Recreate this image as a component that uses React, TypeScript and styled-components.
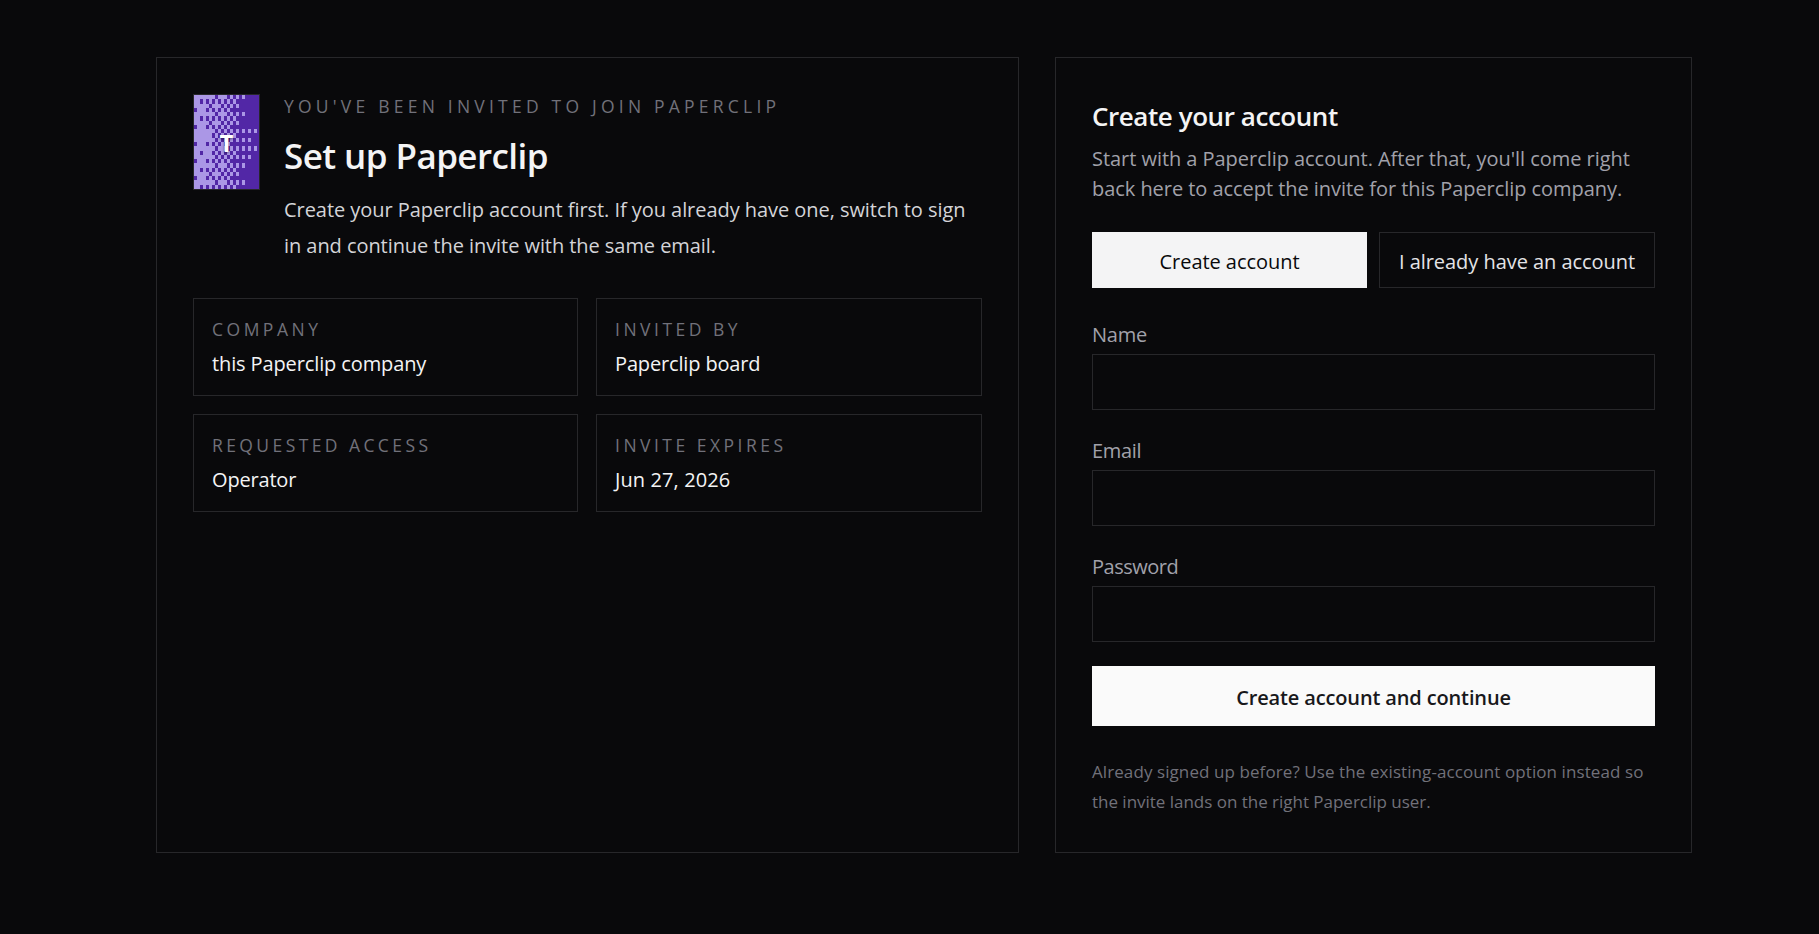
import React from 'react';
import styled, { createGlobalStyle } from 'styled-components';

const GlobalStyle = createGlobalStyle`
  *, *::before, *::after { box-sizing: border-box; }
  html, body { margin: 0; background: #09090b; }
  body {
    font-family: "Open Sans", "Noto Sans", sans-serif;
    font-size: 20px;
    line-height: 30px;
    color: #f4f4f5;
  }
  h1, h2, p { margin: 0; }
`;

const Page = styled.main`
  padding: 57px 127px 80px 156px;
`;

const Layout = styled.div`
  display: grid;
  grid-template-columns: 863px 637px;
  gap: 36px;
`;

const Panel = styled.section`
  border: 1px solid #27272a;
  padding: 36px 36px 35px;
`;

const Line = styled.span<{ $tracking?: number }>`
  display: block;
  white-space: nowrap;
  letter-spacing: ${({ $tracking = 0 }) => $tracking}px;
`;

const InviteHeader = styled.header`
  display: flex;
  align-items: flex-start;
  gap: 24px;
`;

const LogoFrame = styled.div`
  display: grid;
  flex: none;
  width: 67px;
  height: 96px;
  border: 1px solid #27272a;
  background: #5227a6;
  overflow: hidden;
  > * { grid-area: 1 / 1; }
`;

const Pattern = styled.svg`
  display: block;
  width: 65px;
  height: 94px;
`;

const Initial = styled.span`
  place-self: center;
  padding-top: 1px;
  font-size: 24px;
  font-weight: 700;
  line-height: 36px;
  color: #fff;
  text-shadow: 0 1px 3px rgba(0, 0, 0, 0.55);
`;

const Eyebrow = styled.p<{ $tracking: number }>`
  font-size: 17.5px;
  line-height: 24px;
  letter-spacing: ${({ $tracking }) => $tracking}px;
  text-transform: uppercase;
  white-space: nowrap;
  color: #71717a;
`;

const InviteTitle = styled.h1`
  margin-top: 14px;
  font-size: 35px;
  font-weight: 600;
  line-height: 48px;
  letter-spacing: -0.57px;
`;

const InviteText = styled.p`
  margin-top: 12px;
  line-height: 36px;
  color: #d4d4d8;
`;

const Facts = styled.div`
  display: grid;
  grid-template-columns: 385px 386px;
  gap: 18px;
  margin-top: 34px;
`;

const Fact = styled.div`
  border: 1px solid #27272a;
  padding: 18px 18px 16px;
`;

const FactValue = styled.div`
  margin-top: 8px;
  color: #f4f4f5;
`;

const AccountTitle = styled.h2`
  font-size: 26px;
  font-weight: 600;
  line-height: 44px;
  letter-spacing: -0.44px;
`;

const AccountText = styled.p`
  margin-top: 6px;
  color: #a1a1aa;
`;

const Tabs = styled.div`
  display: grid;
  grid-template-columns: 275px 276px;
  gap: 12px;
  margin-top: 28px;
`;

const Tab = styled.button<{ $active?: boolean }>`
  height: 56px;
  padding: 3px 0 0;
  border: 1px solid ${({ $active }) => ($active ? '#f4f4f5' : '#27272a')};
  background: ${({ $active }) => ($active ? '#f4f4f5' : 'transparent')};
  color: ${({ $active }) => ($active ? '#09090b' : '#e4e4e7')};
  font: inherit;
  letter-spacing: -0.05px;
`;

const Form = styled.form`
  display: flex;
  flex-direction: column;
  gap: 26px;
  margin-top: 32px;
`;

const Field = styled.label`
  display: flex;
  flex-direction: column;
  gap: 4px;
  color: #a1a1aa;
`;

const Input = styled.input`
  width: 100%;
  height: 56px;
  padding: 0 18px;
  border: 1px solid #27272a;
  border-radius: 0;
  background: transparent;
  color: #f4f4f5;
  font: inherit;
  outline: none;
`;

const Submit = styled.button`
  height: 60px;
  margin-top: -2px;
  padding: 3px 0 0;
  border: 0;
  background: #fafafa;
  color: #18181b;
  font: inherit;
  font-weight: 600;
  letter-spacing: -0.14px;
`;

const Footnote = styled.p`
  margin-top: 31px;
  font-size: 17px;
  color: #71717a;
`;

const ROWS = [
  '#######.###.#.#.#.....',
  '##.#.#.#.#.#.#........',
  '#####.###.#.#.#.......',
  '.###.#.#.#.#..........',
  '#######.###.#.#.#.....',
  '##.#.#.#.#.#.#........',
  '#####.###.#.#.#.......',
  '.###.#.#.#.#..........',
  '#######.#.#.#.#.#.#.#.',
  '######.#.#.#.#........',
  '#######.#.#.#.#.#.#...',
  '.###.#.#.#.#..........',
  '#######.###.#.#.#.#.#.',
  '##.###.#.#.#.#........',
  '#######.#.#.#.#.#.#...',
  '.###.#.#.#.#..........',
  '#######.###.#.#.#.....',
  '##.#.#.#.#.#.#........',
  '#####.###.#.#.#.......',
  '.###.#.#.#.#..........',
  '#######.###.#.#.#.....',
  '##.#.#.#.#.#.#........',
];

const FACTS = [
  { label: 'Company', labelTracking: 3.5, value: 'this Paperclip company', tracking: -0.12 },
  { label: 'Invited by', labelTracking: 3.5, value: 'Paperclip board', tracking: -0.15 },
  { label: 'Requested access', labelTracking: 3.41, value: 'Operator', tracking: -0.18 },
  { label: 'Invite expires', labelTracking: 3.49, value: 'Jun 27, 2026', tracking: 0.1 },
];

const FIELDS = [
  { label: 'Name', type: 'text', tracking: -0.27 },
  { label: 'Email', type: 'email', tracking: -0.34 },
  { label: 'Password', type: 'password', tracking: -0.5 },
];

function CompanyLogo() {
  return (
    <LogoFrame>
      <Pattern viewBox="0 0 65 94" shapeRendering="crispEdges">
        {ROWS.flatMap((row, y) =>
          [...row].map((cell, x) =>
            cell === '#' ? (
              <rect
                key={`${x}-${y}`}
                x={x * 3}
                y={Math.round((y * 94) / 22)}
                width={3}
                height={Math.round(((y + 1) * 94) / 22) - Math.round((y * 94) / 22)}
                fill="#ab97e6"
              />
            ) : null,
          ),
        )}
      </Pattern>
      <Initial>T</Initial>
    </LogoFrame>
  );
}

export default function App() {
  return (
    <>
      <GlobalStyle />
      <Page>
        <Layout>
          <Panel>
            <InviteHeader>
              <CompanyLogo />
              <div>
                <Eyebrow $tracking={4.22}>You've been invited to join Paperclip</Eyebrow>
                <InviteTitle>Set up Paperclip</InviteTitle>
                <InviteText>
                  <Line $tracking={-0.055}>
                    Create your Paperclip account first. If you already have one, switch to sign
                  </Line>
                  <Line $tracking={-0.06}>in and continue the invite with the same email.</Line>
                </InviteText>
              </div>
            </InviteHeader>
            <Facts>
              {FACTS.map((fact) => (
                <Fact key={fact.label}>
                  <Eyebrow $tracking={fact.labelTracking}>{fact.label}</Eyebrow>
                  <FactValue>
                    <Line $tracking={fact.tracking}>{fact.value}</Line>
                  </FactValue>
                </Fact>
              ))}
            </Facts>
          </Panel>
          <Panel>
            <AccountTitle>Create your account</AccountTitle>
            <AccountText>
              <Line $tracking={-0.045}>
                Start with a Paperclip account. After that, you'll come right
              </Line>
              <Line $tracking={-0.05}>
                back here to accept the invite for this Paperclip company.
              </Line>
            </AccountText>
            <Tabs>
              <Tab type="button" $active>
                Create account
              </Tab>
              <Tab type="button">I already have an account</Tab>
            </Tabs>
            <Form>
              {FIELDS.map((field) => (
                <Field key={field.label}>
                  <Line $tracking={field.tracking}>{field.label}</Line>
                  <Input type={field.type} />
                </Field>
              ))}
              <Submit type="button">Create account and continue</Submit>
            </Form>
            <Footnote>
              <Line $tracking={0.085}>
                Already signed up before? Use the existing-account option instead so
              </Line>
              <Line $tracking={-0.02}>the invite lands on the right Paperclip user.</Line>
            </Footnote>
          </Panel>
        </Layout>
      </Page>
    </>
  );
}
